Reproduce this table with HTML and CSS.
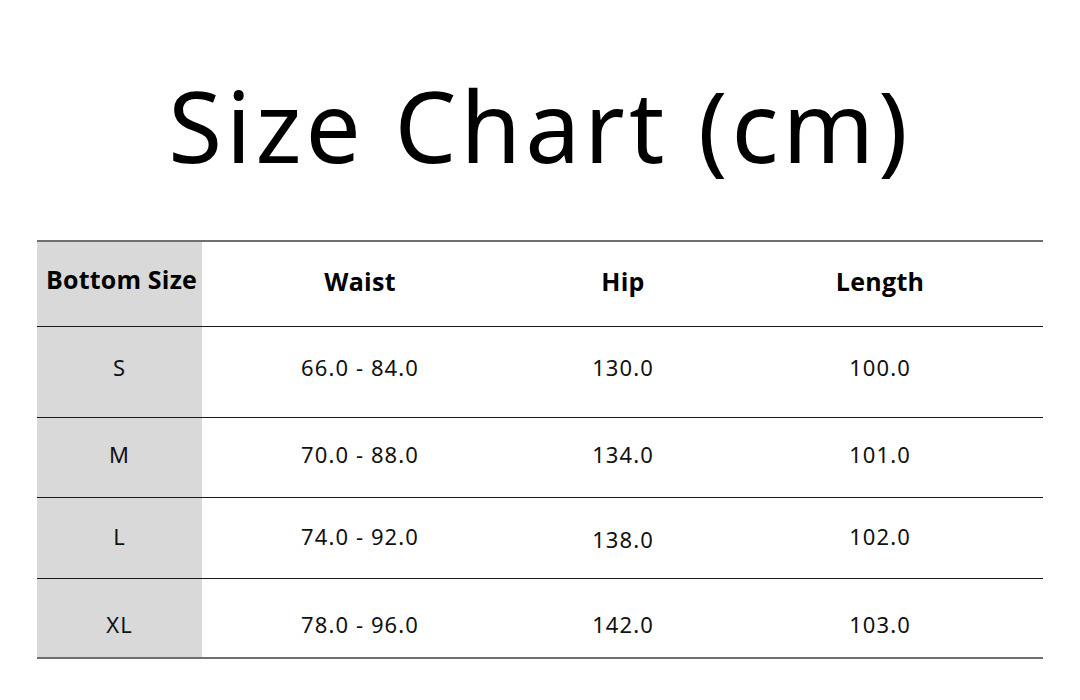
FILE: index.html
```html
<!DOCTYPE html>
<html>
<head>
<meta charset="utf-8">
<link rel="stylesheet" href="styles.css">
</head>
<body>
<div class="page">
  <h1 class="title">Size Chart (cm)</h1>
  <div class="chart">
    <div class="row head">
      <div class="cell first">Bottom Size</div>
      <div class="cell">Waist</div>
      <div class="cell">Hip</div>
      <div class="cell">Length</div>
      <div class="cell"></div>
    </div>
    <div class="row r-s">
      <div class="cell first">S</div>
      <div class="cell">66.0 - 84.0</div>
      <div class="cell">130.0</div>
      <div class="cell">100.0</div>
      <div class="cell"></div>
    </div>
    <div class="row r-m">
      <div class="cell first">M</div>
      <div class="cell">70.0 - 88.0</div>
      <div class="cell">134.0</div>
      <div class="cell">101.0</div>
      <div class="cell"></div>
    </div>
    <div class="row r-l">
      <div class="cell first">L</div>
      <div class="cell">74.0 - 92.0</div>
      <div class="cell low">138.0</div>
      <div class="cell">102.0</div>
      <div class="cell"></div>
    </div>
    <div class="row r-xl">
      <div class="cell first">XL</div>
      <div class="cell">78.0 - 96.0</div>
      <div class="cell">142.0</div>
      <div class="cell">103.0</div>
      <div class="cell"></div>
    </div>
  </div>
</div>
</body>
</html>
```

FILE: styles.css
```css
* { box-sizing: border-box; }
html, body { margin: 0; padding: 0; background: #ffffff; }
body { width: 1080px; height: 700px; overflow: hidden; color: #000; }

.page { display: flex; flex-direction: column; align-items: center; }

.title {
  margin: 0;
  height: 240px;
  padding-top: 65px;
  font-family: "Noto Sans", "DejaVu Sans", sans-serif;
  font-weight: 400;
  font-size: 98px;
  line-height: 120px;
  letter-spacing: 4.1px;
  text-align: center;
}

.chart {
  width: 1006px;
  border-top: 2px solid #6f6f6f;
  border-bottom: 2px solid #6f6f6f;
}

.row {
  display: grid;
  grid-template-columns: 165px 316px 210px 304px 1fr;
  border-bottom: 1px solid #1a1a1a;
  font-family: "Noto Sans", "DejaVu Sans", sans-serif;
  font-size: 22px;
  letter-spacing: 1.1px;
  color: #111;
}
.row:last-child { border-bottom: none; }

.cell {
  display: flex;
  align-items: center;
  justify-content: center;
  white-space: nowrap;
}
.first { background: #d9d9d9; }

.head {
  height: 85px;
  font-family: "Open Sans", "Noto Sans", sans-serif;
  font-weight: 700;
  font-size: 25px;
  letter-spacing: 0.3px;
  color: #000;
}
.head .cell { padding-bottom: 6px; }
.head .first { font-size: 25px; letter-spacing: 0.2px; padding-bottom: 10px; padding-left: 4px; }
.r-s { height: 91px; }
.r-s .cell { padding-bottom: 10px; }
.r-m { height: 80px; }
.r-m .cell { padding-bottom: 8px; }
.r-l { height: 81px; }
.r-l .cell { padding-bottom: 4px; }
.r-l .low { padding-bottom: 0; padding-top: 2px; }
.r-xl { height: 78px; }
.r-xl .cell { padding-top: 12px; }
```
